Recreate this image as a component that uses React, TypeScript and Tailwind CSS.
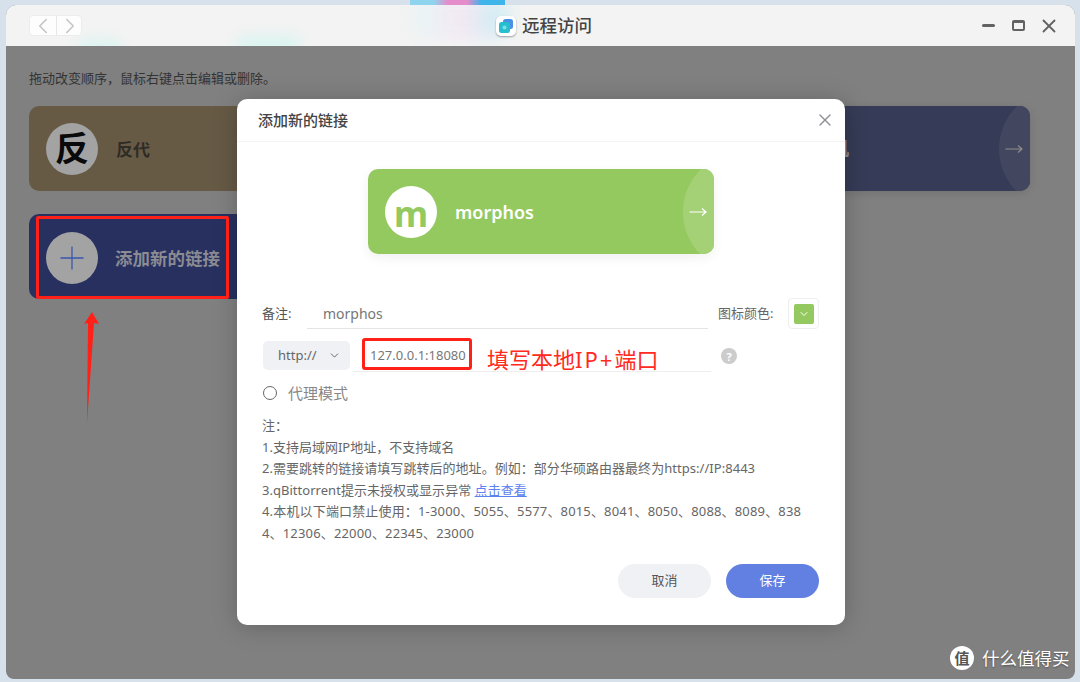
import React from 'react';
import { ChevronDown, ChevronLeft, ChevronRight, Plus, X } from 'lucide-react';

const font = 'font-["Noto_Sans","Noto_Sans_CJK_SC",sans-serif]';

const ArrowTab = ({ bg, color }: { bg: string; color: string }) => (
  <>
    <div className={`absolute left-[calc(100%-31px)] top-[-17.5px] w-[120px] h-[120px] rounded-full ${bg}`} />
    <svg className="absolute right-[7px] top-[37px]" width="18" height="12" viewBox="0 0 18 12" fill="none" stroke={color} strokeWidth="1.2">
      <path d="M0.5 6H17M13 2.5L17 6L13 9.5" />
    </svg>
  </>
);

const AppIcon = () => (
  <div className="w-[20px] h-[20px] rounded-[5px] bg-white shadow-[0_1px_2px_rgba(0,0,0,0.35)] flex items-center justify-center">
    <svg width="16" height="16" viewBox="0 0 16 16">
      <rect x="5" y="1" width="10" height="10" rx="2.5" fill="#4a8fe8" />
      <rect x="1" y="4" width="11" height="11" rx="2.5" fill="#26bfd0" />
      <circle cx="6.5" cy="9.5" r="2" fill="#7fdde6" />
    </svg>
  </div>
);

export default function App() {
  return (
    <div className={`relative w-[1080px] h-[682px] overflow-hidden bg-[#d6e1ec] pt-[5px] pl-[6px] pr-[5px] pb-[3px] ${font}`}>
      {/* wallpaper bits above the window */}
      <div className="absolute left-[410px] top-0 w-[95px] h-[5px] bg-[linear-gradient(90deg,#8fd4ee_0%,#8fd4ee_25%,#e58ccb_40%,#e58ccb_60%,#3db4ea_75%,#3db4ea_100%)]" />

      <div className="relative w-full h-full rounded-t-[10px] rounded-b-[8px] overflow-hidden bg-[#808080] flex flex-col">
        {/* title bar */}
        <div className="relative h-[41px] shrink-0 bg-[#f3f3f3] flex items-center overflow-hidden">
          <div className="absolute left-[72px] top-[34px] w-[44px] h-[16px] rounded-full bg-[#dcf4f0] blur-[6px]" />
          <div className="absolute left-[230px] top-[30px] w-[66px] h-[20px] rounded-full bg-[#dcf4f0] blur-[6px]" />
          <div className="absolute left-[408px] top-[-8px] w-[95px] h-[42px] rounded-full bg-[linear-gradient(90deg,#e6f6f6,#f4e8f3,#c8eef4)] blur-[8px]" />
          <div className="relative ml-[23px] flex w-[53px] h-[21px] rounded-[4px] bg-white/80 border border-[#ececec] divide-x divide-[#e6e6e6]">
            <div className="flex-1 flex items-center justify-center"><ChevronLeft size={26} strokeWidth={1.4} color="#c4c4c4" /></div>
            <div className="flex-1 flex items-center justify-center"><ChevronRight size={26} strokeWidth={1.4} color="#c4c4c4" /></div>
          </div>
          <div className="relative ml-[414px] flex items-center gap-[6px]">
            <AppIcon />
            <span className="text-[17.5px] font-medium text-[#444] leading-none">远程访问</span>
          </div>
          <div className="relative ml-auto mr-[15px] flex items-center gap-[17px] text-[#5f5f5f]">
            <div className="w-[13px] h-[3px] rounded-full bg-[#626262]" />
            <div className="w-[13px] h-[11px] rounded-[2px] border-2 border-t-[3px] border-[#626262]" />
            <X size={22} strokeWidth={2} color="#626262" className="ml-[-4px]" />
          </div>
        </div>

        {/* page content */}
        <div className="flex-1 pl-[23px] pt-[23px]">
          <p className="text-[13px] leading-[18px] text-[#333]">拖动改变顺序，鼠标右键点击编辑或删除。</p>
          <div className="mt-[19px] grid grid-cols-[321px_321px_321px] gap-x-[19px] gap-y-[23px]">
            <div className="relative h-[85px] rounded-[10px] overflow-hidden bg-[#665a45] flex items-center pl-[17px]">
              <div className="w-[52px] h-[52px] rounded-full bg-[#a3a3a3] flex items-center justify-center text-[34px] font-bold text-[#0a0a0a]">反</div>
              <span className="ml-[18px] pt-[3px] text-[17px] font-bold text-[#2f2c26]">反代</span>
            </div>
            <div className="relative h-[85px] rounded-[10px] overflow-hidden bg-[#3a4058]" />
            <div className="relative h-[85px] rounded-[10px] overflow-hidden bg-[#363b57] flex items-center pl-[86px] shadow-[0_2px_10px_rgba(0,0,0,0.12)]">
              <span className="text-[18px] font-bold text-[#8f8f8f]">虚拟机</span>
              <ArrowTab bg="bg-[#42465f]" color="#8d8d8d" />
            </div>
            <div className="relative h-[85px] rounded-[10px] overflow-hidden bg-[#283060] flex items-center pl-[17px]">
              <div className="w-[52px] h-[52px] mt-[2px] rounded-full bg-[#a3a3a3] flex items-center justify-center">
                <Plus size={38} strokeWidth={0.8} color="#3a54b0" />
              </div>
              <span className="ml-[17px] pt-[3px] text-[17.5px] font-bold text-[#8b8b93]">添加新的链接</span>
            </div>
          </div>
        </div>
      </div>

      {/* dialog */}
      <div className="absolute left-[237px] top-[99px] w-[608px] h-[526px] rounded-[10px] bg-white shadow-[0_2px_24px_rgba(0,0,0,0.22)] flex flex-col">
        <div className="h-[43px] shrink-0 border-b border-[#f3f3f5] flex items-center justify-between pl-[21px] pr-[12px]">
          <span className="text-[15px] font-medium text-[#444]">添加新的链接</span>
          <X size={20} strokeWidth={1.6} color="#8e8e93" className="mr-[-2px]" />
        </div>

        <div className="flex-1 flex flex-col pl-[25px] pr-[26px]">
          <div className="relative self-center mt-[27px] mr-[-1px] w-[346px] h-[85px] rounded-[10px] overflow-hidden bg-[#94c95f] flex items-center pl-[17px] shadow-[0_4px_12px_rgba(0,0,0,0.06)]">
            <div className="w-[52px] h-[52px] rounded-full bg-white flex items-center justify-center text-[35px] leading-none font-bold text-[#94c95f] pt-[4px]">m</div>
            <span className="ml-[18px] pt-[2px] text-[18px] font-semibold text-white">morphos</span>
            <ArrowTab bg="bg-[#a4d176]" color="#ffffff" />
          </div>

          {/* remark row */}
          <div className="mt-[44px] flex items-center h-[31px]">
            <span className="w-[45px] text-[13px] text-[#555]">备注:</span>
            <div className="w-[401px] h-[31px] border-b border-[#e4e4e4] pl-[16px] flex items-center text-[14px] text-[#777]">morphos</div>
            <span className="ml-[10px] w-[70px] text-[13px] text-[#666]">图标颜色:</span>
            <div className="w-[31px] h-[31px] rounded-[4px] border border-[#eeeeee] flex items-center justify-center">
              <div className="w-[20px] h-[20px] rounded-[2px] bg-[#94c95f] flex items-center justify-center">
                <ChevronDown size={12} color="#ffffff" />
              </div>
            </div>
          </div>

          {/* address row */}
          <div className="mt-[12px] pl-[1px] flex items-start h-[31px]">
            <div className="w-[87px] h-[29px] rounded-[5px] bg-[#f0f1f5] flex items-center pl-[15px] text-[13px] text-[#666]">
              http://
              <ChevronDown size={13} strokeWidth={1.8} color="#666" className="ml-[11px]" />
            </div>
            <div className="ml-[3px] w-[358px] h-[31px] border-b border-[#eeeeee] pl-[17px] flex items-center text-[13px] text-[#777]">127.0.0.1:18080</div>
            <div className="ml-[10px] mt-[7px] w-[16px] h-[16px] rounded-full bg-[#cccccc] flex items-center justify-center text-[11px] font-bold text-white leading-none">?</div>
          </div>

          <label className="mt-[10px] flex items-center h-[22px]">
            <span className="ml-[1px] w-[14px] h-[14px] rounded-full border border-[#666] bg-white" />
            <span className="ml-[11px] text-[15px] text-[#888]">代理模式</span>
          </label>

          {/* notes */}
          <div className="mt-[11px] w-[543px] text-[13px] leading-[21.6px] text-[#666] break-all">
            <p>注：</p>
            <p>1.支持局域网IP地址，不支持域名</p>
            <p className="tracking-[0.04px]">2.需要跳转的链接请填写跳转后的地址。例如：部分华硕路由器最终为https://IP:8443</p>
            <p className="tracking-[0.03px]">3.qBittorrent提示未授权或显示异常 <a className="text-[#5b82ee] underline">点击查看</a></p>
            <p className="tracking-[0.16px]">4.本机以下端口禁止使用：1-3000、5055、5577、8015、8041、8050、8088、8089、8384、12306、22000、22345、23000</p>
          </div>

          <div className="mt-auto mb-[27px] flex justify-end gap-[15px]">
            <button className="w-[93px] h-[34px] rounded-full bg-[#f0f1f5] text-[13px] text-[#555]">取消</button>
            <button className="w-[93px] h-[34px] rounded-full bg-[#6280e2] text-[13px] text-white">保存</button>
          </div>
        </div>
      </div>

      {/* red annotations */}
      <div className="absolute left-[36px] top-[216px] w-[193px] h-[83px] rounded-[2px] border-[3px] border-[#ff2018]" />
      <div className="absolute left-[362px] top-[338px] w-[110px] h-[32px] rounded-[3px] border-[3px] border-[#ff2018]" />
      <span className="absolute left-[487px] top-[344px] text-[22px] leading-[31px] text-[#ff2a20]">填写本地<span className="tracking-[2px]">IP+</span>端口</span>
      <svg className="absolute left-[60px] top-[300px]" width="60" height="130" viewBox="0 0 60 130">
        <path d="M32 12L39 24L34 23L27 123L28 23L24 24Z" fill="#ff2018" />
      </svg>

      {/* watermark */}
      <div className="absolute left-[950px] top-[646px] flex items-center gap-[8px]">
        <div className="w-[24px] h-[24px] rounded-full bg-white flex items-center justify-center text-[15px] font-bold text-[#555] leading-none">值</div>
        <span className="text-[17.5px] leading-[24px] text-white [text-shadow:0_1px_2px_rgba(0,0,0,0.4)]">什么值得买</span>
      </div>
    </div>
  );
}
